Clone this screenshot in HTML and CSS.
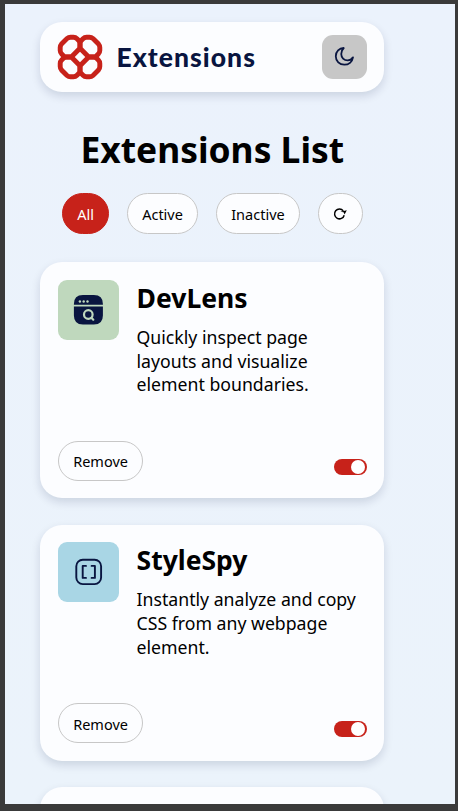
FILE: index.html
```html
<!DOCTYPE html>
<html lang="en">
<head>
<meta charset="utf-8">
<title>Extensions</title>
<link rel="stylesheet" href="styles.css">
</head>
<body>
<div class="page">
  <header class="header">
    <div class="brand">
      <svg class="logo" viewBox="-22 -22 44 44" aria-hidden="true">
        <defs><path id="loop" d="M-18.500-13L-13-18.500Q-11.500-19.800-9.500-19.800H-6.500Q-4.500-19.800-3-18.300L-1.300-16.600Q0-15.300 0-13.500V-10Q0-8.700-1-7.700L-7.700-1Q-8.700 0-10 0H-13.500Q-15.300 0-16.600-1.300L-18.300-3Q-19.800-4.500-19.800-6.500V-9.500Q-19.800-11.500-18.500-13Z"/></defs>
        <use href="#loop"/>
        <use href="#loop" transform="rotate(90)"/>
        <use href="#loop" transform="rotate(180)"/>
        <use href="#loop" transform="rotate(270)"/>
      </svg>
      <span class="wordmark">Extensions</span>
    </div>
    <button class="theme" aria-label="Theme">
      <svg viewBox="0 0 20 20" aria-hidden="true"><path d="M9.300 1.900C5 2 1.700 5.200 1.700 9.700c0 4.700 3.600 8.100 8.100 8.100 4.200 0 7.600-2.700 8.300-7-1.300 2-3.100 2.900-5.100 2.900-3.500 0-6.100-2.600-6.100-6 0-2.300.8-4.300 2.400-5.800Z"/></svg>
    </button>
  </header>

  <h1 class="heading">Extensions List</h1>

  <nav class="filters">
    <button class="pill pill-active">All</button>
    <button class="pill">Active</button>
    <button class="pill">Inactive</button>
    <button class="pill pill-reset" aria-label="Reset">
      <svg viewBox="0 0 16 14" aria-hidden="true"><path class="arc" d="M11.300 3.900A4.900 4.900 0 1 0 12.200 8.200"/><path d="M8.300 4.800L14.800 3.200L12.600 7.400L11.600 5.200Z"/></svg>
    </button>
  </nav>

  <main class="list">
    <article class="card">
      <div class="card-top">
        <div class="icon icon-green">
          <svg viewBox="0 0 30 30" aria-hidden="true">
            <path fill="#091540" d="M.9 9.800V9Q.9 0 9.900 0H20.900Q29.900 0 29.900 9V9.800ZM.9 11.500H29.900V20.500Q29.900 29.500 20.900 29.500H9.900Q.9 29.500 .9 20.500Z"/>
            <g fill="#bfd8bd"><circle cx="6.900" cy="6.500" r="1.200"/><circle cx="10.700" cy="6.500" r="1.200"/><circle cx="14.500" cy="6.500" r="1.200"/></g>
            <g fill="none" stroke="#bfd8bd" stroke-width="2.200" stroke-linecap="round"><circle cx="15.300" cy="19.500" r="4.300"/><path d="M18.400 22.700l1.900 2"/></g>
          </svg>
        </div>
        <div class="copy">
          <h2 class="title">DevLens</h2>
          <p class="text">Quickly inspect page layouts and visualize element boundaries.</p>
        </div>
      </div>
      <div class="card-bottom">
        <button class="pill pill-remove">Remove</button>
        <span class="switch"></span>
      </div>
    </article>

    <article class="card">
      <div class="card-top">
        <div class="icon icon-blue">
          <svg viewBox="0 0 30 30" aria-hidden="true">
            <g fill="none" stroke="#091540" stroke-width="1.900" stroke-linecap="round" stroke-linejoin="round"><rect x="3.300" y="2.700" width="24.800" height="24.400" rx="6.500"/><path d="M13 8.900H9.700V20.900H13M18.600 8.900H21.900V20.900H18.600"/></g>
          </svg>
        </div>
        <div class="copy">
          <h2 class="title">StyleSpy</h2>
          <p class="text">Instantly analyze and copy CSS from any webpage element.</p>
        </div>
      </div>
      <div class="card-bottom">
        <button class="pill pill-remove">Remove</button>
        <span class="switch"></span>
      </div>
    </article>

    <article class="card"></article>
  </main>
</div>
</body>
</html>
```
FILE: styles.css
```css
* { box-sizing: border-box; }

body {
  margin: 0;
  height: 811px;
  padding: 4px 3px 7px 5px;
  overflow: hidden;
  background: #3a3a3a;
  color: #000;
  font-family: "Noto Sans", sans-serif;
}

.page {
  height: 800px;
  overflow: hidden;
  padding: 18px 70.700px 0 35.200px;
  background: linear-gradient(180deg, #ebf2fc, #ebf3fb);
}

button { font: inherit; color: inherit; padding: 0; }

.header {
  display: flex;
  align-items: center;
  justify-content: space-between;
  height: 69.500px;
  padding: 0 17.700px;
  border-radius: 22px;
  background: #fcfdff;
  box-shadow: 0 4px 10px rgba(9, 21, 64, .14);
}

.brand { display: flex; align-items: center; gap: 14.500px; }

.logo {
  width: 44px;
  height: 44px;
  overflow: visible;
  fill: none;
  stroke: #c7221a;
  stroke-width: 4.900;
}

.wordmark {
  color: #091540;
  font-family: Lato, sans-serif;
  font-size: 26.500px;
  font-weight: 900;
  line-height: 36px;
  letter-spacing: 1.050px;
}

.theme {
  display: grid;
  place-items: center;
  width: 44.500px;
  height: 44px;
  border: 0;
  border-radius: 11px;
  background: #c7c7c7;
}

.theme svg {
  width: 21px;
  height: 21px;
  fill: none;
  stroke: #091540;
  stroke-width: 1.700;
  stroke-linejoin: round;
}

.heading {
  margin: 33.500px 0 0;
  font-size: 35.400px;
  line-height: 49px;
  font-weight: 700;
  text-align: center;
}

.filters {
  display: flex;
  justify-content: center;
  gap: 17.700px;
  margin-top: 19px;
}

.pill {
  height: 41px;
  padding: 1px 14.300px 0;
  border: 1px solid #c7c7c7;
  border-radius: 20.500px;
  background: #fcfdff;
  font-size: 14.500px;
}

.pill-active { border-color: #c7221a; background: #c7221a; color: #fff; }

.pill-reset { display: grid; place-items: center; width: 45px; padding: 0; }
.pill-reset svg { width: 16px; height: 14px; }
.pill-reset .arc { fill: none; stroke: #000; stroke-width: 1.500; }

.list { display: grid; gap: 26.500px; margin-top: 28.300px; }

.card {
  display: flex;
  flex-direction: column;
  justify-content: space-between;
  height: 236px;
  padding: 17.700px;
  border-radius: 22px;
  background: #fcfdff;
  box-shadow: 0 4px 10px rgba(9, 21, 64, .14);
}

.card-top { display: flex; gap: 17.700px; }

.icon {
  display: grid;
  place-items: center;
  flex: none;
  width: 61px;
  height: 60px;
  border-radius: 9px;
}

.icon svg { width: 30px; height: 30px; }
.icon-green { background: #bfd8bd; }
.icon-blue { background: #a9d6e5; }

.title { margin: 0; font-size: 26.500px; line-height: 36px; font-weight: 700; }

.text { margin: 10px 0 0; font-size: 17.680px; line-height: 23.700px; }

.card-bottom { display: flex; justify-content: space-between; align-items: flex-end; }

.pill-remove { height: 40px; }

.switch {
  display: flex;
  justify-content: flex-end;
  width: 33px;
  height: 16px;
  margin-bottom: 6px;
  padding: 1px 2px 1px 1px;
  border-radius: 8px;
  background: #c7221a;
}

.switch::after {
  content: "";
  width: 14px;
  height: 14px;
  border-radius: 50%;
  background: #fff;
}
```
